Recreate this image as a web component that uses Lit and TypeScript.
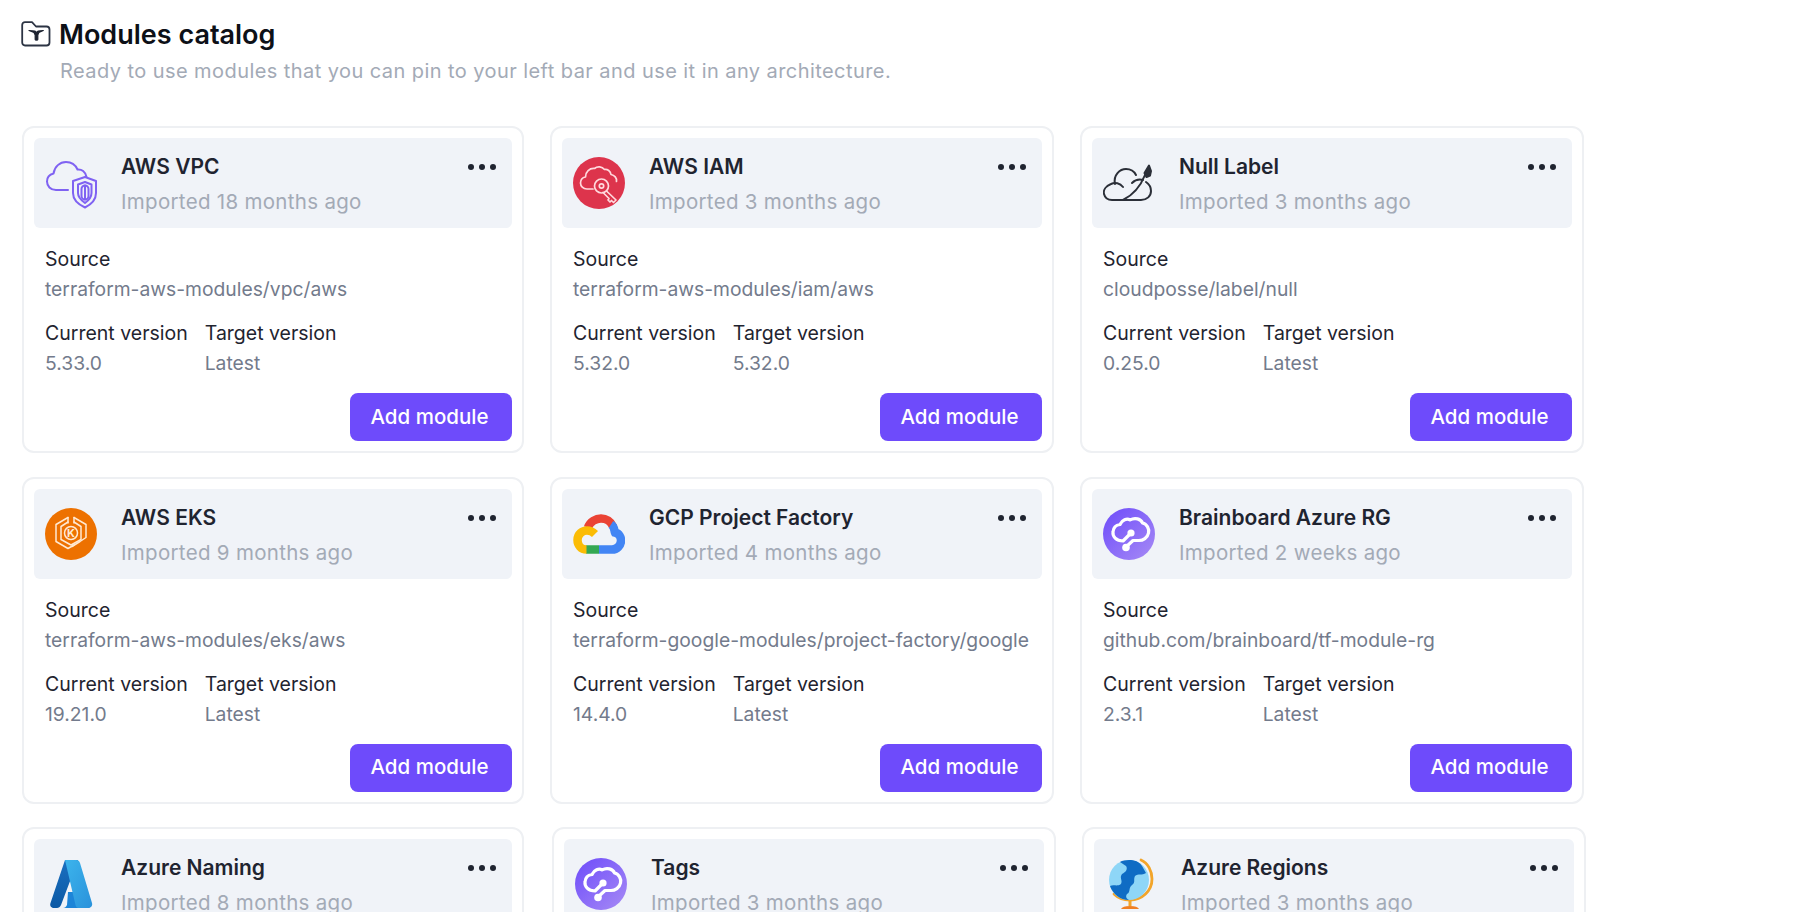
import { LitElement, html, css, svg } from "lit";
import { customElement } from "lit/decorators.js";

const brainIcon = (id: string) => svg`<svg viewBox="0 0 52 52" width="52" height="52">
  <defs><linearGradient id=${id} x1="0" y1="0" x2="1" y2="1"><stop offset="0" stop-color="#6d4bfa"/><stop offset="1" stop-color="#a78bf5"/></linearGradient></defs>
  <circle cx="26" cy="26" r="26" fill="url(#${id})"/>
  <path d="M28 25 20 33C13 33 9.500 28.500 10 24 10.300 20 13 17 17 16.500 19 12 24 10 27 12 32 9 38 11 39.500 15 44 16 46.500 21 45.500 25 44.500 30 40 32.500 36 32.500H30L23 39" fill="none" stroke="#fff" stroke-width="3.200" stroke-linecap="round" stroke-linejoin="round"/>
  <circle cx="28" cy="25" r="3.600" fill="#fff"/>
  <circle cx="23" cy="39.500" r="3.800" fill="#fff"/>
</svg>`;

const icons: Record<string, unknown> = {
  vpc: svg`<svg viewBox="0 0 52 52" width="52" height="52" fill="none" stroke="#7f62f2" stroke-width="2" stroke-linecap="round" stroke-linejoin="round">
    <path d="M23 33H11C5.500 33 2 29 2 24.500 2 20.500 4.500 17.500 8.500 16.500 9.500 9.500 15 5 21 5c5.500 0 9.500 3 11.500 7.500 4-.5 8 2 9 7.500"/>
    <path d="M40 20 51 24V36c0 7-5 11.500-11 14.500C33.500 47.500 28 43 28 36V24Z"/>
    <path d="M40 25 46.500 27.500V36c0 4-3 7.500-6.500 10-3.500-2.500-7-6-7-10V27.500Z"/>
    <rect x="36.500" y="28.500" width="7" height="14" rx="3.500"/>
    <path d="M40 28.500V42.500"/>
  </svg>`,
  iam: svg`<svg viewBox="0 0 52 52" width="52" height="52" fill="none">
    <circle cx="26" cy="26" r="26" fill="#dd344c"/>
    <g stroke="#ffd9dd" stroke-width="1.700" stroke-linecap="round" stroke-linejoin="round">
      <path d="M20 32h-6c-4 0-6.500-3-6.500-6s2-5.500 5-6c0-5 4-9 9-8.500 3-2.500 7.500-2 10 1 3-.5 6 1.500 6.500 5 3.500.5 6 3.500 5.500 7"/>
      <circle cx="28.500" cy="29" r="7"/>
      <circle cx="28.500" cy="29" r="2.200"/>
      <path d="M33.500 34 43 43l-2.500 2.500-2-2-1.500 1.500-2-2 1-1.500-6-6"/>
    </g>
  </svg>`,
  nul: svg`<svg viewBox="0 0 52 52" width="52" height="52" fill="none" stroke="#2b2f38" stroke-width="2" stroke-linecap="round" stroke-linejoin="round">
    <path d="M12 27C10 18 17 12 23 12c4 0 8 2 10 6"/>
    <path d="M20 30C17 26 12 25 8 27 3 29 0 33 1 37c1 4 4 6 8 6H38c6 0 10-4 10-9 0-4-2-7-5-9"/>
    <path d="M20 43C30 38 38 28 42 18"/>
    <path d="M29 26c3-3 7-4 11-3"/>
    <path d="M41.500 16 46 8.500 48 14 47 18.500 43.500 20Z" fill="#2b2f38"/>
  </svg>`,
  eks: svg`<svg viewBox="0 0 52 52" width="52" height="52" fill="none">
    <circle cx="26" cy="26" r="26" fill="#ed7100"/>
    <g stroke="#ffe9d2" stroke-width="1.500" stroke-linejoin="round" stroke-linecap="round">
      <path d="M23 9.500 11 16.500v17L23 40.500l6-3.500"/>
      <path d="M29 9.500 41 16.500v13l-6 4-8 5"/>
      <path d="M23 14 16 18.500v13l10 5.500 10-5.500v-13L29 14"/>
      <path d="M23 9.500V15M29 9.500V15"/>
      <circle cx="26" cy="25" r="6.500"/>
    </g>
    <text x="26" y="29" text-anchor="middle" class="k">K</text>
  </svg>`,
  gcp: svg`<svg viewBox="0 0 52 40" width="52" height="40" fill="none" stroke-width="8.500">
    <path d="M15 13.500C17 7.500 23 4.500 28 4.500c5 0 10 3 12 8" stroke="#ea4335"/>
    <path d="M38 10.500c4 2.500 3 6 4 8 4.500 1 6 5 6 8 0 5-4 9-9 9H26" stroke="#4285f4"/>
    <path d="M26 35.500H13" stroke="#34a853"/>
    <path d="M13.500 35.500C8 35.500 4.500 31 4.500 26c0-6 5-9.500 9.500-9.500 3.500 0 6 1.500 8 3.500" stroke="#fbbc05"/>
  </svg>`,
  brain1: brainIcon("bg1"),
  brain2: brainIcon("bg2"),
  azure: svg`<svg viewBox="0 0 46 52" width="46" height="52" fill="none">
    <defs>
      <linearGradient id="az1" x1="0" y1="0" x2="0" y2="1"><stop offset="0" stop-color="#1a6fc0"/><stop offset="1" stop-color="#0c59a4"/></linearGradient>
      <linearGradient id="az2" x1="0" y1="0" x2="1" y2="1"><stop offset="0" stop-color="#3cb4ec"/><stop offset="1" stop-color="#2a92db"/></linearGradient>
    </defs>
    <path d="M17 2h13L13 47c-.8 2-2.300 3-4 3H6c-3 0-4.500-2.500-3.500-5Z" fill="url(#az1)"/>
    <path d="M20 34h8l4 12.500c1 2 0 3.500-1 3.500H15c2 0 3-1 4-3Z" fill="#1d85d8"/>
    <path d="M17 2h11c2 0 3.500 1 4 3l12 40c.8 2.500-1 5-3.500 5H31c-2 0-3-1-3.500-3L17 2Z" fill="url(#az2)"/>
  </svg>`,
  globe: svg`<svg viewBox="0 0 46 52" width="46" height="52" fill="none">
    <path d="M33 2c7 3 11 11 11 19 0 12-10 21-22 21-6 0-12-2-16-6" stroke="#f2a52b" stroke-width="2.800" stroke-linecap="round"/>
    <circle cx="21" cy="22" r="20" fill="#8ed6f7"/>
    <path d="M12 4C18 1 30 1 34 8l4 7c-4 3-8 0-11 3-2 4 1 6-3 9-4 3-1 7-5 9-2 3 0 5 2 6C12 42 5 36 2 28c4-2 7 1 11-2 2-4-2-6 1-10 4-2 6-5 4-8Z" fill="#0f6cc4"/>
    <path d="M22 42v6" stroke="#f2a52b" stroke-width="3"/>
    <path d="M13 51c1-2 4-3 9-3s8 1 9 3Z" fill="#f07f23"/>
  </svg>`,
};

type Mod = { name: string; when: string; source: string; cur: string; target: string; icon: string };

const mods: Mod[] = [
  { name: "AWS VPC", when: "Imported 18 months ago", source: "terraform-aws-modules/vpc/aws", cur: "5.33.0", target: "Latest", icon: "vpc" },
  { name: "AWS IAM", when: "Imported 3 months ago", source: "terraform-aws-modules/iam/aws", cur: "5.32.0", target: "5.32.0", icon: "iam" },
  { name: "Null Label", when: "Imported 3 months ago", source: "cloudposse/label/null", cur: "0.25.0", target: "Latest", icon: "nul" },
  { name: "AWS EKS", when: "Imported 9 months ago", source: "terraform-aws-modules/eks/aws", cur: "19.21.0", target: "Latest", icon: "eks" },
  { name: "GCP Project Factory", when: "Imported 4 months ago", source: "terraform-google-modules/project-factory/google", cur: "14.4.0", target: "Latest", icon: "gcp" },
  { name: "Brainboard Azure RG", when: "Imported 2 weeks ago", source: "github.com/brainboard/tf-module-rg", cur: "2.3.1", target: "Latest", icon: "brain1" },
  { name: "Azure Naming", when: "Imported 8 months ago", source: "", cur: "", target: "", icon: "azure" },
  { name: "Tags", when: "Imported 3 months ago", source: "", cur: "", target: "", icon: "brain2" },
  { name: "Azure Regions", when: "Imported 3 months ago", source: "", cur: "", target: "", icon: "globe" },
];

@customElement("app-root")
export class AppRoot extends LitElement {
  static styles = css`
    :host {
      display: block;
      height: 912px;
      overflow: hidden;
      background: #fff;
      font-family: Inter, "Liberation Sans", sans-serif;
      color: #1f2430;
    }
    .page { padding: 18px 0 0 22px; }
    .head { display: flex; align-items: center; gap: 8px; height: 34px; margin-left: -1px; }
    .head svg { display: block; flex: none; margin-top: -3px; }
    h1 { margin: 0; font-size: 27px; line-height: 34px; font-weight: 600; color: #0d1017; }
    .sub { margin: 5px 0 0 38px; font-size: 20px; line-height: 28px; color: #a3aab6; letter-spacing: 0.43px; }
    .grid { display: grid; grid-template-columns: 502px 504px 504px; column-gap: 26px; row-gap: 23.500px; margin-top: 41px; }
    .card { box-sizing: border-box; height: 327px; border: 2px solid #eef0f3; border-radius: 12px; padding: 10px; display: flex; flex-direction: column; }
    .card:nth-child(n + 8) { margin: 0 -2px 0 2px; }
    .top { box-sizing: border-box; height: 90px; flex: none; background: #f0f3f8; border-radius: 6px; padding: 0 11px; display: flex; align-items: center; position: relative; }
    .ico { width: 52px; height: 52px; flex: none; display: flex; align-items: center; justify-content: center; }
    .ico svg { display: block; }
    .k { font: 700 11px Inter, sans-serif; fill: #ffe9d2; stroke: none; }
    .tt { margin-left: 24px; flex: 1; align-self: flex-start; }
    .name { font-size: 21px; line-height: 28px; font-weight: 600; margin-top: 15px; color: #1f2430; }
    .when { font-size: 20.500px; line-height: 28px; color: #a3aab6; margin-top: 7px; letter-spacing: 0.3px; }
    .dots { position: absolute; right: 15px; top: 26px; display: flex; gap: 4px; }
    .dots i { display: block; width: 6px; height: 6px; border-radius: 50%; background: #1f2430; margin-right: 1px; }
    .body { padding: 18px 11px 0; }
    .lbl { font-size: 19.500px; line-height: 26px; color: #1f2430; white-space: nowrap; }
    .val { font-size: 19.300px; line-height: 26px; color: #737b8c; margin-top: 4px; white-space: nowrap; }
    .vers { display: flex; gap: 17px; margin-top: 18px; }
    .foot { display: flex; justify-content: flex-end; margin-top: auto; }
    button { width: 162px; height: 48px; border: 0; border-radius: 8px; background: #6e4bfb; color: #fff; font: 500 20.500px Inter, sans-serif; padding: 0 3px 2px 0; }
  `;

  render() {
    return html`<div class="page">
      <div class="head">
        <svg viewBox="0 0 30 26" width="30" height="26" fill="none">
          <path d="M1.200 4c0-1.600 1.200-2.800 2.800-2.800h7l4 4.300h10.500c1.700 0 3 1.300 3 3V21.500c0 1.700-1.300 3-3 3H4c-1.600 0-2.800-1.300-2.800-3Z" stroke="#2c3444" stroke-width="1.800" stroke-linejoin="round"/>
          <path d="M8 9.500l5 2 1.200 2.500v4.500c0 .8 2.600.8 2.600 0V14l1-2.500 4.500-2-5 .5-2 1.500-1.500-1.500Z" fill="#1c2230" stroke="#1c2230" stroke-width="1.200" stroke-linejoin="round"/>
        </svg>
        <h1>Modules catalog</h1>
      </div>
      <div class="sub">Ready to use modules that you can pin to your left bar and use it in any architecture.</div>
      <div class="grid">
        ${mods.map(
          (m) => html`<div class="card">
            <div class="top">
              <div class="ico">${icons[m.icon]}</div>
              <div class="tt">
                <div class="name">${m.name}</div>
                <div class="when">${m.when}</div>
              </div>
              <div class="dots"><i></i><i></i><i></i></div>
            </div>
            ${m.source
              ? html`<div class="body">
                    <div class="lbl">Source</div>
                    <div class="val">${m.source}</div>
                    <div class="vers">
                      <div><div class="lbl">Current version</div><div class="val">${m.cur}</div></div>
                      <div><div class="lbl">Target version</div><div class="val">${m.target}</div></div>
                    </div>
                  </div>
                  <div class="foot"><button>Add module</button></div>`
              : ""}
          </div>`
        )}
      </div>
    </div>`;
  }
}
